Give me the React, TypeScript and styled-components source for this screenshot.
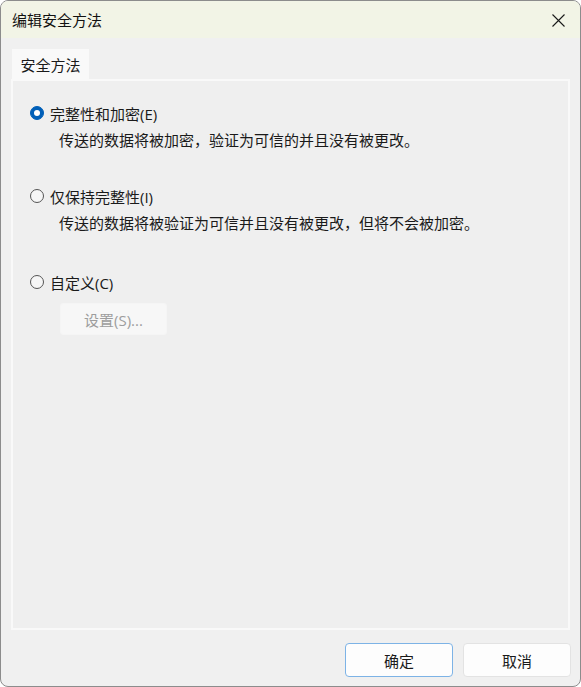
import React, { useState } from "react";
import styled, { createGlobalStyle } from "styled-components";

const GlobalStyle = createGlobalStyle`
  html, body {
    margin: 0;
    padding: 0;
    background: #ffffff;
  }
  * {
    box-sizing: border-box;
  }
`;

const Window = styled.div`
  width: 581px;
  height: 687px;
  display: flex;
  flex-direction: column;
  border: 1px solid #8c8c8c;
  border-radius: 8px;
  overflow: hidden;
  background: #f0f0f0;
  font-family: "Open Sans", "Noto Sans CJK SC", sans-serif;
  font-size: 15px;
  color: #1a1a1a;
`;

const TitleBar = styled.div`
  height: 37px;
  flex: none;
  display: flex;
  align-items: center;
  justify-content: space-between;
  padding: 0 12px 0 11px;
  background: #f2f4e6;
`;

const Title = styled.span`
  font-size: 15px;
  color: #111;
  margin-top: -1px;
`;

const CloseButton = styled.button`
  width: 20px;
  height: 20px;
  padding: 0;
  border: none;
  background: transparent;
  display: flex;
  align-items: center;
  justify-content: center;
  margin-top: 1px;
`;

const Body = styled.div`
  flex: 1;
  display: flex;
  flex-direction: column;
  padding: 11px 10px 0 10px;
`;

const TabStrip = styled.div`
  display: flex;
  padding-left: 1px;
`;

const Tab = styled.div`
  width: 77px;
  height: 31px;
  display: flex;
  align-items: center;
  justify-content: center;
  background: #f9f9f9;
  font-size: 15px;
  margin-bottom: -1px;
  position: relative;
  z-index: 1;
`;

const Panel = styled.div`
  height: 551px;
  border: 2px solid #f9f9f9;
  background: #efefef;
  padding: 19px 17px 0 17px;
  display: flex;
  flex-direction: column;
`;

const Option = styled.div<{ $space: number }>`
  display: flex;
  flex-direction: column;
  margin-top: ${(p) => p.$space}px;
`;

const RadioRow = styled.label`
  height: 26px;
  display: flex;
  align-items: center;
  gap: 6px;
  cursor: default;
`;

const RadioCircle = styled.span<{ $checked: boolean }>`
  width: 14px;
  height: 14px;
  border-radius: 50%;
  flex: none;
  display: flex;
  align-items: center;
  justify-content: center;
  background: ${(p) => (p.$checked ? "#005fb8" : "#f6f6f6")};
  border: 1px solid ${(p) => (p.$checked ? "#005fb8" : "#555555")};

  &::after {
    content: "";
    display: ${(p) => (p.$checked ? "block" : "none")};
    width: 6px;
    height: 6px;
    border-radius: 50%;
    background: #ffffff;
  }
`;

const Description = styled.div`
  height: 26px;
  display: flex;
  align-items: center;
  padding-left: 29px;
`;

const SettingsButton = styled.button`
  width: 107px;
  height: 32px;
  margin: 8px 0 0 30px;
  border: 1px solid #f5f5f5;
  border-radius: 3px;
  background: #f7f7f7;
  color: #9d9d9d;
  font-family: inherit;
  font-size: 15px;
`;

const Footer = styled.div`
  flex: 1;
  display: flex;
  justify-content: flex-end;
  align-items: flex-start;
  gap: 10px;
  padding-top: 13px;
  margin-right: -1px;
`;

const DialogButton = styled.button<{ $primary?: boolean }>`
  width: 108px;
  height: 34px;
  border-radius: 4px;
  border: 1px solid ${(p) => (p.$primary ? "#7db3e6" : "#e3e3e3")};
  background: #fdfdfd;
  color: #1a1a1a;
  font-family: inherit;
  font-size: 15px;
`;

const options = [
  {
    key: "E",
    label: "完整性和加密(E)",
    desc: "传送的数据将被加密，验证为可信的并且没有被更改。",
    space: 0,
  },
  {
    key: "I",
    label: "仅保持完整性(I)",
    desc: "传送的数据将被验证为可信并且没有被更改，但将不会被加密。",
    space: 31,
  },
  {
    key: "C",
    label: "自定义(C)",
    desc: "",
    space: 34,
  },
];

const App: React.FC = () => {
  const [selected, setSelected] = useState("E");

  return (
    <>
      <GlobalStyle />
      <Window>
        <TitleBar>
          <Title>编辑安全方法</Title>
          <CloseButton aria-label="关闭">
            <svg width="13" height="13" viewBox="0 0 13 13">
              <path d="M0.5 0.5 L12.5 12.5 M12.5 0.5 L0.5 12.5" stroke="#1a1a1a" strokeWidth="1.1" fill="none" />
            </svg>
          </CloseButton>
        </TitleBar>

        <Body>
          <TabStrip>
            <Tab>安全方法</Tab>
          </TabStrip>
          <Panel>
            {options.map((opt) => (
              <Option key={opt.key} $space={opt.space}>
                <RadioRow onClick={() => setSelected(opt.key)}>
                  <RadioCircle $checked={selected === opt.key} />
                  {opt.label}
                </RadioRow>
                {opt.desc && <Description>{opt.desc}</Description>}
                {opt.key === "C" && <SettingsButton disabled>设置(S)...</SettingsButton>}
              </Option>
            ))}
          </Panel>

          <Footer>
            <DialogButton $primary>确定</DialogButton>
            <DialogButton>取消</DialogButton>
          </Footer>
        </Body>
      </Window>
    </>
  );
};

export default App;
